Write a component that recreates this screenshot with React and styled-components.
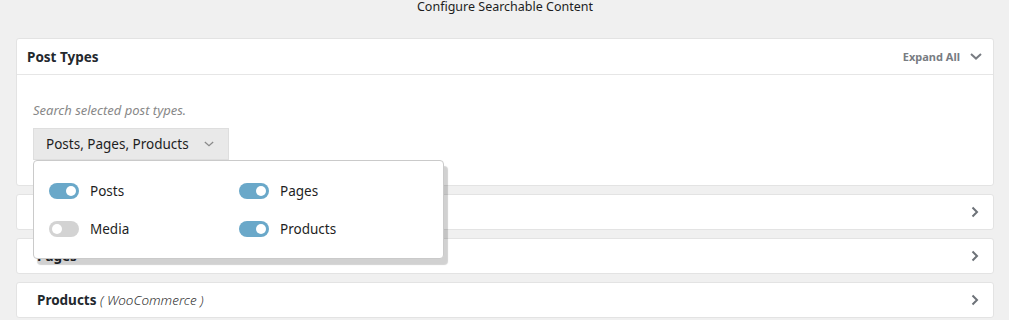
import React from "react";
import styled, { createGlobalStyle } from "styled-components";

const Global = createGlobalStyle`
  html, body { margin: 0; padding: 0; }
  body {
    background: #f0f0f0;
    font-family: "Noto Sans", "Open Sans", sans-serif;
    color: #1e1e1e;
  }
`;

const Page = styled.div`
  padding: 0 15px 0 16px;
`;

const Title = styled.div`
  text-align: center;
  font-size: 12.5px;
  line-height: 13px;
  height: 38px;
  color: #1e1e1e;
`;

const Card = styled.div`
  background: #fff;
  border: 1px solid #e3e3e3;
  border-radius: 3px;
  margin-bottom: 8px;
`;

const CardHeader = styled.div`
  display: flex;
  align-items: center;
  justify-content: space-between;
  height: 35px;
  padding: 0 11px 0 10px;
  border-bottom: ${(p) => (p.$open ? "1px solid #e6e6e6" : "none")};
`;

const HeaderTitle = styled.div`
  font-size: 13.5px;
  font-weight: 700;
  color: #23282d;
`;

const Sub = styled.span`
  font-weight: 300;
  font-style: italic;
  color: #333;
`;

const ExpandAll = styled.div`
  display: flex;
  align-items: center;
  gap: 10px;
  font-size: 11px;
  font-weight: 700;
  color: #787c82;
`;

const CardBody = styled.div`
  padding: 26px 16px 25px 16px;
`;

const Hint = styled.div`
  font-size: 13px;
  font-style: italic;
  color: #888;
  line-height: 18px;
  margin-bottom: 9px;
`;

const DropWrap = styled.div`
  position: relative;
  width: 196px;
`;

const DropButton = styled.div`
  box-sizing: border-box;
  height: 32px;
  display: flex;
  align-items: center;
  justify-content: space-between;
  padding: 0 14px 0 12px;
  background: #e9e9e9;
  border: 1px solid #dedede;
  font-size: 13.5px;
  color: #1e1e1e;
`;

const Popup = styled.div`
  position: absolute;
  top: 100%;
  left: 0;
  width: 411px;
  box-sizing: border-box;
  background: #fff;
  border: 1px solid #cacaca;
  border-radius: 4px;
  box-shadow: 4px 6px 1px rgba(0, 0, 0, 0.18);
  padding: 20px 15px 19px 15px;
  display: grid;
  grid-template-columns: 190px 1fr;
  row-gap: 18px;
  z-index: 5;
`;

const Option = styled.div`
  display: flex;
  align-items: center;
  gap: 11px;
  height: 20px;
  font-size: 13.5px;
  color: #1e1e1e;
`;

const Toggle = styled.span`
  position: relative;
  width: 30px;
  height: 16px;
  border-radius: 8px;
  background: ${(p) => (p.$on ? "#6aa8c9" : "#d3d3d3")};
  flex-shrink: 0;
  &::after {
    content: "";
    position: absolute;
    top: 3px;
    left: ${(p) => (p.$on ? "17px" : "3px")};
    width: 10px;
    height: 10px;
    border-radius: 50%;
    background: #fff;
  }
`;

const Row = styled(Card)`
  display: flex;
  align-items: center;
  justify-content: space-between;
  height: 34px;
  padding: 0 14px 0 20px;
`;

const ChevronDown = ({ size = 12, color = "#787c82", w = 2 }) => (
  <svg width={size} height={size * 0.6} viewBox="0 0 12 7" fill="none">
    <polyline points="1,1 6,5.5 11,1" stroke={color} strokeWidth={w} />
  </svg>
);

const ChevronRight = () => (
  <svg width="8" height="12" viewBox="0 0 8 12" fill="none">
    <polyline points="1.5,1.5 6,6 1.5,10.5" stroke="#6d7278" strokeWidth="2" />
  </svg>
);

const options = [
  { label: "Posts", on: true },
  { label: "Pages", on: true },
  { label: "Media", on: false },
  { label: "Products", on: true },
];

export default function App() {
  return (
    <>
      <Global />
      <Page>
        <Title>Configure Searchable Content</Title>
        <Card>
          <CardHeader $open>
            <HeaderTitle>Post Types</HeaderTitle>
            <ExpandAll>
              Expand All
              <ChevronDown />
            </ExpandAll>
          </CardHeader>
          <CardBody>
            <Hint>Search selected post types.</Hint>
            <DropWrap>
              <DropButton>
                Posts, Pages, Products
                <ChevronDown size={10} color="#8a8a8a" w={1.5} />
              </DropButton>
              <Popup>
                {options.map((o) => (
                  <Option key={o.label}>
                    <Toggle $on={o.on} />
                    {o.label}
                  </Option>
                ))}
              </Popup>
            </DropWrap>
          </CardBody>
        </Card>
        <Row>
          <HeaderTitle>Posts</HeaderTitle>
          <ChevronRight />
        </Row>
        <Row>
          <HeaderTitle>Pages</HeaderTitle>
          <ChevronRight />
        </Row>
        <Row>
          <HeaderTitle>
            Products <Sub>( WooCommerce )</Sub>
          </HeaderTitle>
          <ChevronRight />
        </Row>
      </Page>
    </>
  );
}
